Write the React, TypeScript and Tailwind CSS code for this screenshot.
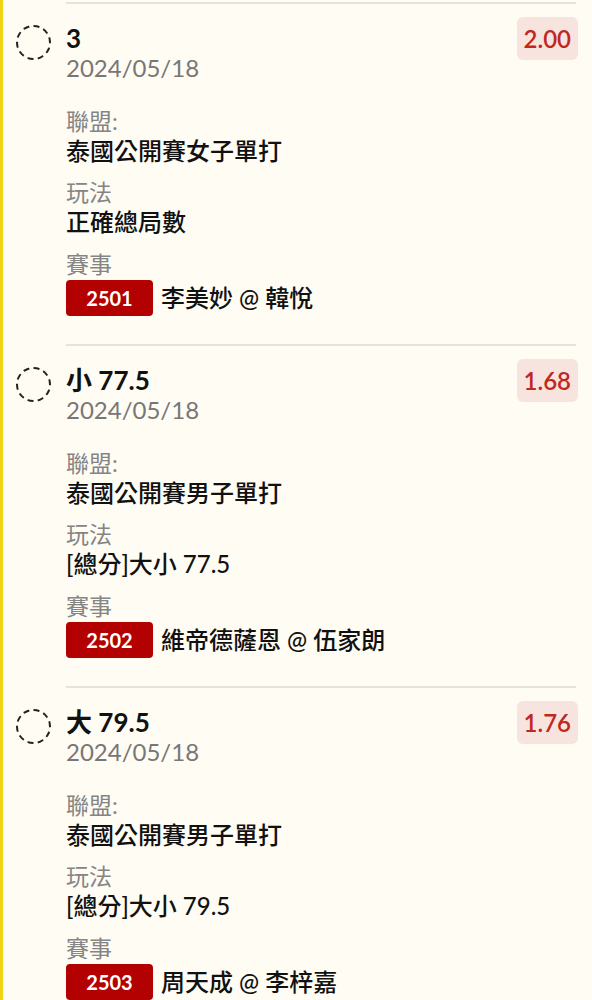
import React from "react"

type Bet = {
  title: string
  date: string
  odds: string
  league: string
  play: string
  code: string
  match: string
}

const bets: Bet[] = [
  { title: "3", date: "2024/05/18", odds: "2.00", league: "泰國公開賽女子單打", play: "正確總局數", code: "2501", match: "李美妙 @ 韓悅" },
  { title: "小 77.5", date: "2024/05/18", odds: "1.68", league: "泰國公開賽男子單打", play: "[總分]大小 77.5", code: "2502", match: "維帝德薩恩 @ 伍家朗" },
  { title: "大 79.5", date: "2024/05/18", odds: "1.76", league: "泰國公開賽男子單打", play: "[總分]大小 79.5", code: "2503", match: "周天成 @ 李梓嘉" },
]

function BetRow({ bet }: { bet: Bet }) {
  return (
    <div className="flex">
      {/* dashed select circle */}
      <div className="w-[66px] shrink-0 pt-[23px] pl-[16px]">
        <div className="h-[35px] w-[35px] rounded-full border-2 border-dashed border-[#222]" />
      </div>

      <div className="flex-1 mr-[16px] border-t-2 border-[#e6e3dd] pt-[13px] pb-[28px]">
        <div className="flex items-start justify-between">
          <div className="pt-[6px]">
            <div className="text-[26px] leading-[30px] font-bold text-[#111]">{bet.title}</div>
            <div className="text-[24px] leading-[30px] text-[#777]">{bet.date}</div>
          </div>
          <div className="h-[43px] px-[7px] -mr-[2px] flex items-center rounded-md bg-[#f7e4de] text-[24px] font-semibold text-[#c0281f]">
            {bet.odds}
          </div>
        </div>

        <div className="mt-[23px] text-[23px] leading-[30px] text-[#858585]">聯盟:</div>
        <div className="text-[24px] leading-[30px] font-medium text-[#111]">{bet.league}</div>

        <div className="mt-[11px] text-[23px] leading-[30px] text-[#858585]">玩法</div>
        <div className="text-[24px] leading-[30px] font-medium text-[#111]">{bet.play}</div>

        <div className="mt-[12px] text-[23px] leading-[30px] text-[#858585]">賽事</div>
        <div className="mt-[1px] flex items-center gap-[8px]">
          <span className="flex h-[36px] w-[87px] items-center justify-center rounded-[4px] bg-[#b30000] text-[20px] font-bold text-white">
            {bet.code}
          </span>
          <span className="text-[24px] leading-[30px] font-medium text-[#111]">{bet.match}</span>
        </div>
      </div>
    </div>
  )
}

export default function App() {
  return (
    <div
      className="min-h-screen bg-[#fffcf4] border-l-[3px] border-[#f3d316] pt-[2px] overflow-hidden"
      style={{ fontFamily: "Lato, 'Noto Sans CJK TC', sans-serif" }}
    >
      <div className="-ml-[3px]">
        {bets.map((b) => (
          <BetRow key={b.code} bet={b} />
        ))}
      </div>
    </div>
  )
}
